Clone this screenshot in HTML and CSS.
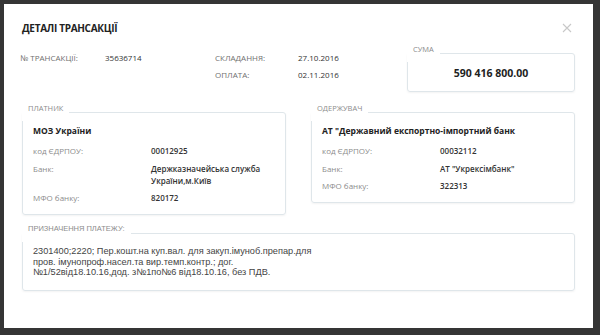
FILE: index.html
```html
<!DOCTYPE html>
<html>
<head>
    <meta charset="UTF-8">
    <meta name="viewport" content="width=device-width, initial-scale=1.0">
    <title>Деталі трансакції</title>
    <link rel="stylesheet" href="styles.css">
</head>
<body>
    <div class="modal">
        <!-- Header -->
        <div class="modal-header">
            <h2 class="modal-title">ДЕТАЛІ ТРАНСАКЦІЇ</h2>
            <button class="close-button" title="Закрити">
                <svg width="10" height="10" viewBox="0 0 10 10">
                    <path d="M1 1 L9 9 M9 1 L1 9" stroke="#c8c8c8" stroke-width="1.1" fill="none"/>
                </svg>
            </button>
        </div>

        <!-- Summary -->
        <div class="summary">
            <div class="summary-info">
                <span class="label">№ ТРАНСАКЦІЇ:</span>
                <span class="value">35636714</span>
                <span class="label">СКЛАДАННЯ:</span>
                <span class="value">27.10.2016</span>
                <span></span>
                <span></span>
                <span class="label">ОПЛАТА:</span>
                <span class="value">02.11.2016</span>
            </div>
            <fieldset class="box sum-box">
                <legend>СУМА</legend>
                <div class="sum">590 416 800.00</div>
            </fieldset>
        </div>

        <!-- Payer / Receiver -->
        <div class="parties">
            <fieldset class="box">
                <legend>ПЛАТНИК</legend>
                <div class="box-body">
                    <div class="party-name">МОЗ України</div>
                    <div class="party-details">
                        <span class="label">код ЄДРПОУ:</span>
                        <span class="value">00012925</span>
                        <span class="label">Банк:</span>
                        <span class="value">Держказначейська служба України,м.Київ</span>
                        <span class="label">МФО банку:</span>
                        <span class="value">820172</span>
                    </div>
                </div>
            </fieldset>
            <fieldset class="box">
                <legend>ОДЕРЖУВАЧ</legend>
                <div class="box-body">
                    <div class="party-name">АТ "Державний експортно-імпортний банк</div>
                    <div class="party-details">
                        <span class="label">код ЄДРПОУ:</span>
                        <span class="value">00032112</span>
                        <span class="label">Банк:</span>
                        <span class="value">АТ "Укрексімбанк"</span>
                        <span class="label">МФО банку:</span>
                        <span class="value">322313</span>
                    </div>
                </div>
            </fieldset>
        </div>

        <!-- Purpose -->
        <fieldset class="box purpose">
            <legend>ПРИЗНАЧЕННЯ ПЛАТЕЖУ:</legend>
            <div class="purpose-text">2301400;2220; Пер.кошт.на куп.вал. для закуп.імуноб.препар.для пров. імунопроф.насел.та вир.темп.контр.; дог. №1/52від18.10.16,дод. з№1по№6 від18.10.16, без ПДВ.</div>
        </fieldset>
    </div>
</body>
</html>
```

FILE: styles.css
```css
/* Page */
body {
    margin: 0;
    height: 100vh;
    box-sizing: border-box;
    padding: 4px 7px 7px 4px;
    background-color: #353535;
    font-family: "Open Sans", Arial, sans-serif;
    color: #333333;
}

/* Modal */
.modal {
    width: 589px;
    height: 324px;
    box-sizing: border-box;
    padding: 16px 18px 0 18px;
    background-color: #ffffff;
}

.modal-header {
    display: flex;
    justify-content: space-between;
    align-items: center;
    height: 16px;
}

.modal-title {
    margin: 0;
    font-size: 10px;
    line-height: 16px;
    font-weight: 700;
    color: #222222;
    letter-spacing: -0.3px;
}

.close-button {
    border: none;
    background: none;
    padding: 0;
    margin-right: 3px;
    width: 10px;
    height: 10px;
    display: flex;
    cursor: pointer;
}

/* Labels and values */
.label {
    color: #8c8c8c;
}

.value {
    color: #333333;
}

/* Boxes */
.box {
    margin: 0;
    padding: 0;
    min-width: 0;
    box-sizing: border-box;
    border: 1px solid #dfe6ea;
    border-radius: 3px;
    box-shadow: 0 1px 2px rgba(0, 0, 0, 0.05);
}

.box legend {
    margin-left: -1px;
    padding: 0 6px 8px 6px;
    font-size: 7.5px;
    line-height: 10px;
    color: #8c8c8c;
    background-color: #ffffff;
}

.box-body {
    padding: 4px 10px 10px 10px;
}

/* Summary */
.summary {
    display: flex;
    margin-top: 8px;
}

.summary-info {
    display: grid;
    grid-template-columns: 85px 110px 83px auto;
    row-gap: 5px;
    align-content: start;
    margin: 8px 0 0 -2px;
    font-size: 8px;
    line-height: 12px;
}

.summary-info .label {
    color: #6f6f6f;
}

.sum-box {
    margin-left: auto;
    width: 168px;
}

.sum {
    padding: 4px 0 11px;
    text-align: center;
    font-size: 10.5px;
    line-height: 14px;
    font-weight: 700;
    color: #222222;
}

/* Parties */
.parties {
    display: grid;
    grid-template-columns: 1fr 1fr;
    column-gap: 25px;
    align-items: start;
    margin-top: 11px;
}

.party-name {
    font-size: 8.5px;
    line-height: 12px;
    font-weight: 700;
    color: #222222;
}

.party-details {
    display: grid;
    grid-template-columns: 118px 1fr;
    row-gap: 5.5px;
    margin-top: 8px;
    font-size: 8px;
    line-height: 12px;
}

.party-details .value {
    font-weight: 600;
}

/* Purpose */
.purpose {
    margin-top: 9px;
}

.purpose legend {
    font-family: "Liberation Sans", Arial, sans-serif;
}

.purpose-text {
    padding: 4px 10px 12px 10px;
    font-family: "Liberation Sans", Arial, sans-serif;
    font-size: 9.2px;
    line-height: 10.5px;
    color: #444444;
    max-width: 285px;
}
```
